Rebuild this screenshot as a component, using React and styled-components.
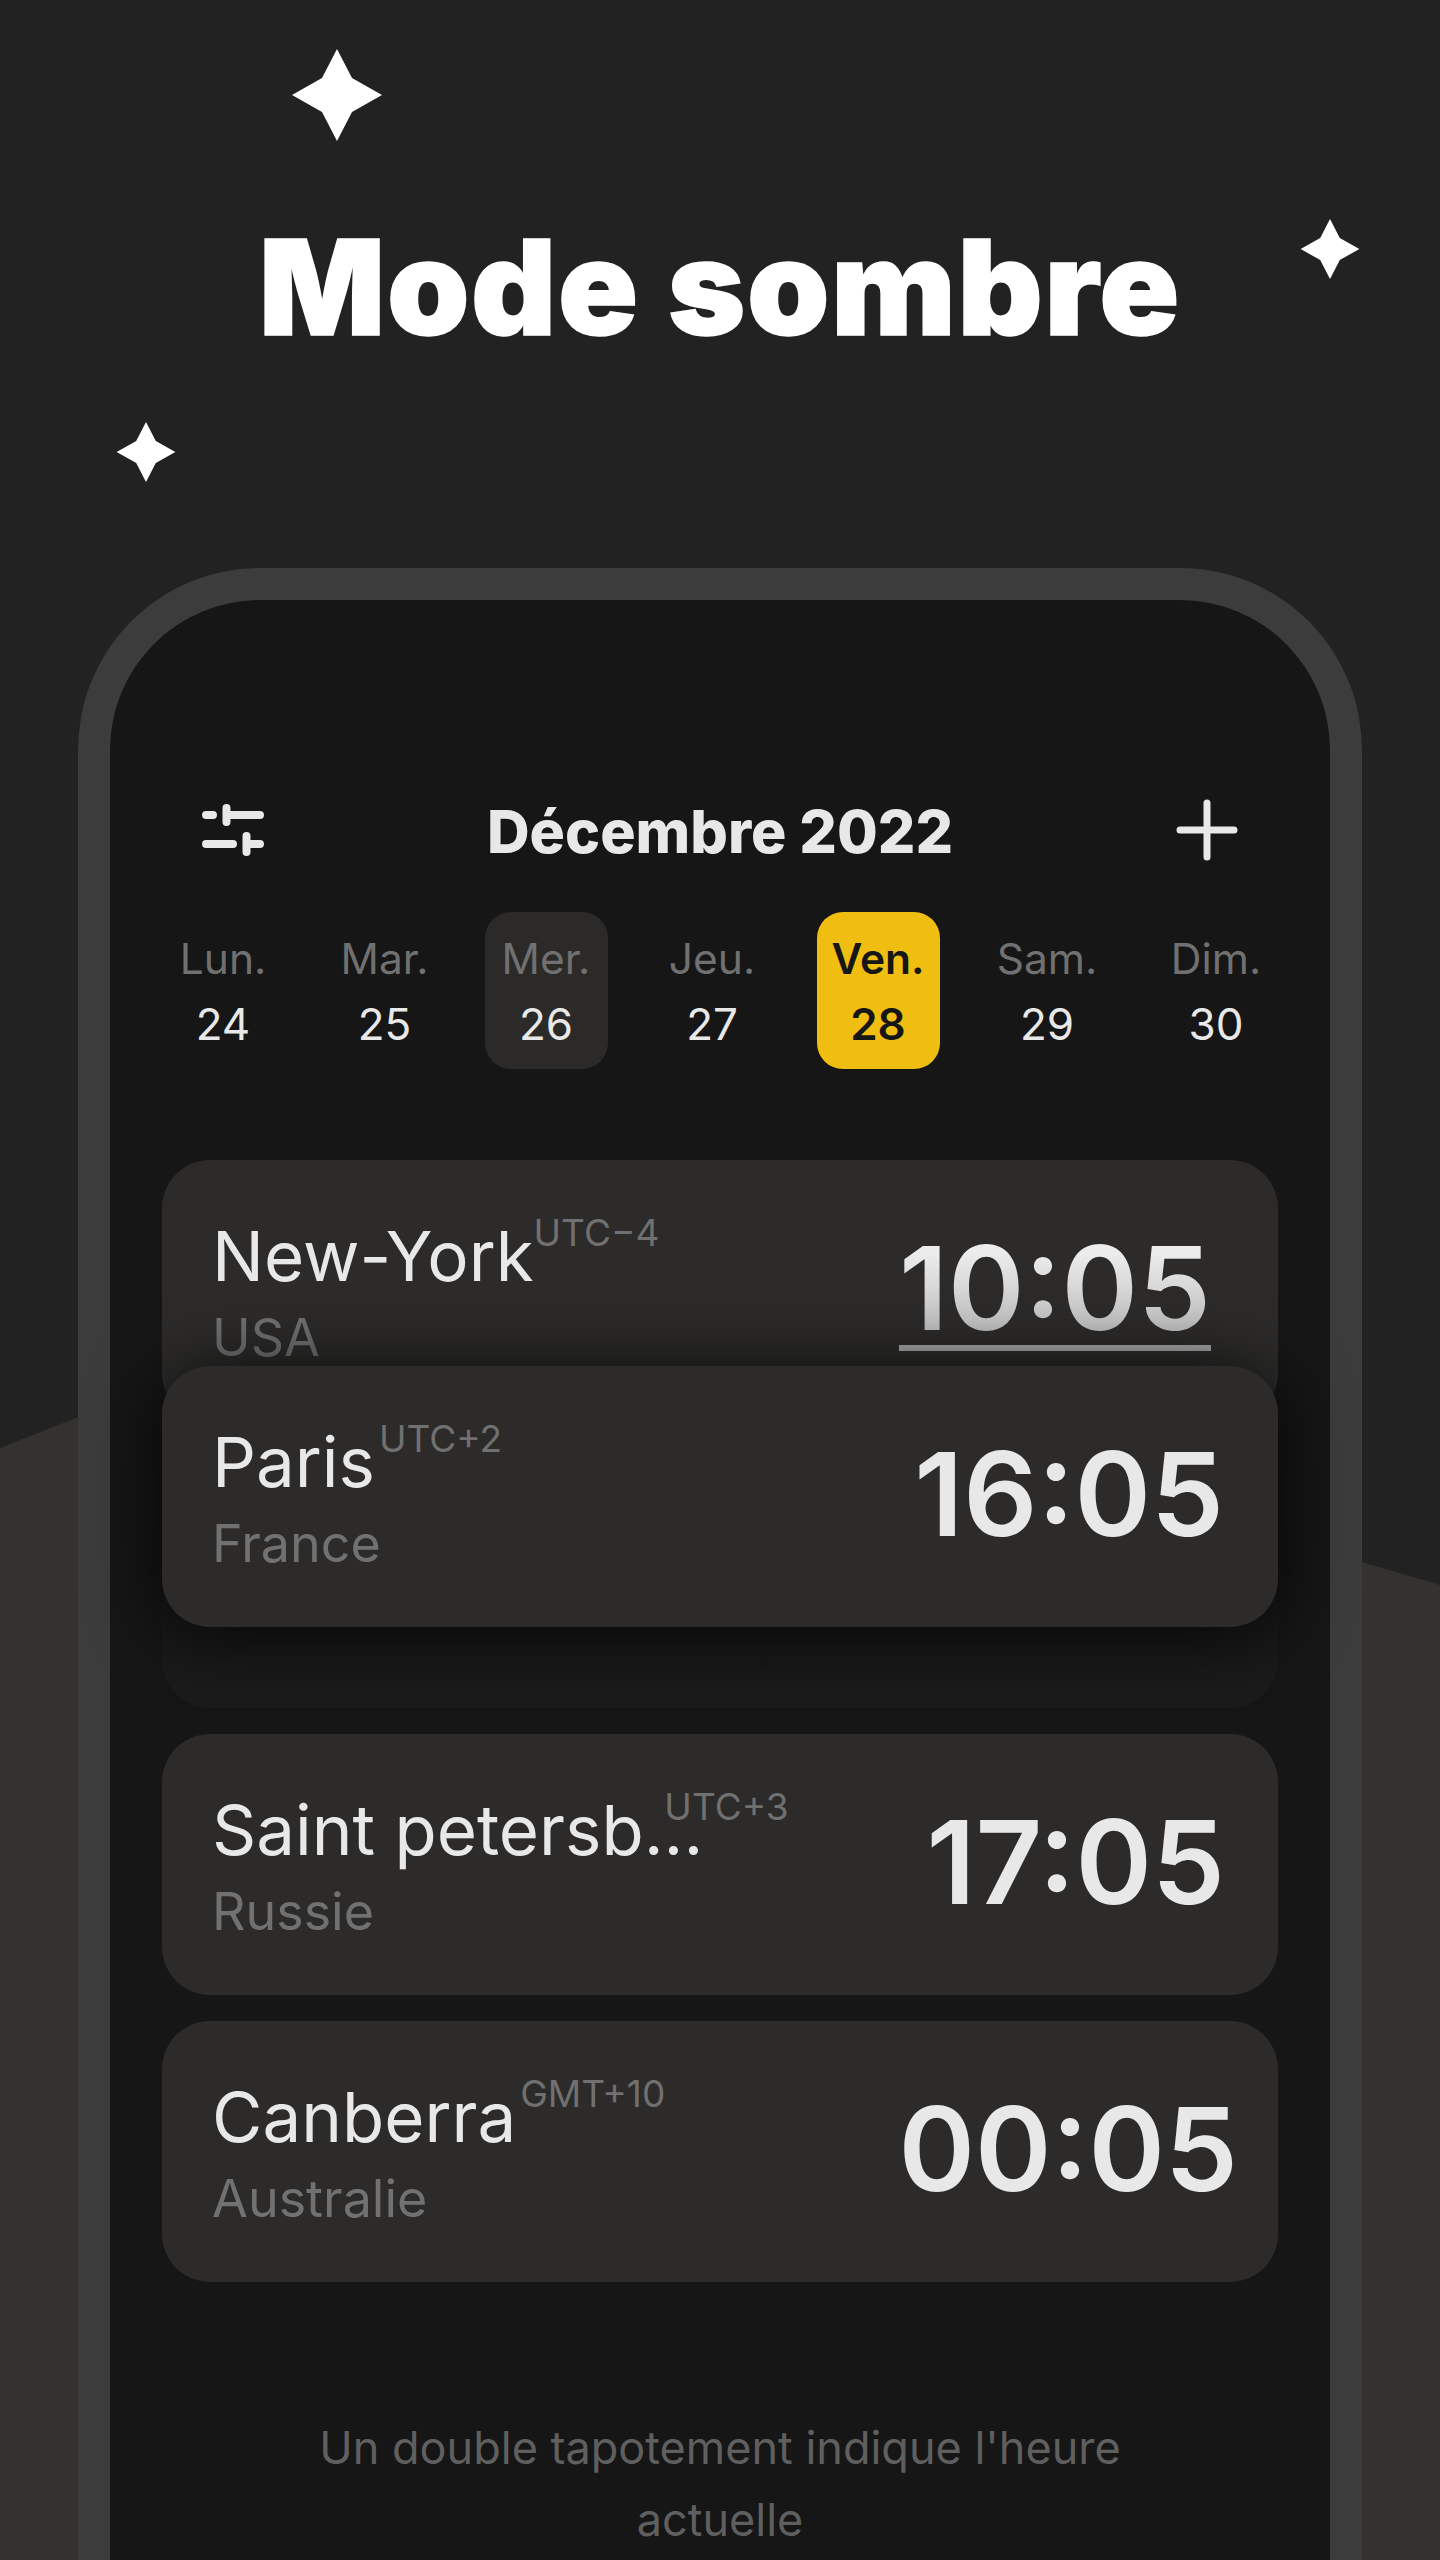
import React from 'react';
import styled, { createGlobalStyle } from 'styled-components';

const Global = createGlobalStyle`
  html, body { margin: 0; padding: 0; background: #222222; }
  body { font-family: Inter, Roboto, "Liberation Sans", sans-serif; }
`;

const Stage = styled.div`
  position: relative;
  width: 1440px;
  height: 2560px;
  overflow: hidden;
  background: #222222;
  display: flex;
  flex-direction: column;
`;

const Hill = styled.svg`
  position: absolute;
  left: 0;
  top: 0;
  width: 1440px;
  height: 2560px;
`;

const Star = styled.svg`
  position: absolute;
  left: ${p => p.$x - p.$r}px;
  top: ${p => p.$y - p.$r}px;
  width: ${p => p.$r * 2}px;
  height: ${p => p.$r * 2}px;
`;

const Title = styled.h1`
  position: relative;
  margin: 0;
  padding-top: 212px;
  height: 568px;
  box-sizing: border-box;
  text-align: center;
  color: #ffffff;
  font-weight: 900;
  font-size: 132px;
  line-height: 150px;
  letter-spacing: 1.7px;
  -webkit-text-stroke: 1.5px #ffffff;
`;

const Phone = styled.div`
  position: relative;
  flex: 1;
  margin: 0 78px;
  border: 32px solid #3c3c3c;
  border-bottom: none;
  border-radius: 182px 182px 0 0;
  background: #161616;
`;

const Header = styled.header`
  display: flex;
  align-items: center;
  justify-content: space-between;
  height: 62px;
  margin-top: 199px;
  padding: 0 92px;
`;

const Month = styled.div`
  color: #e8e8e8;
  font-weight: 800;
  font-size: 59px;
  line-height: 62px;
  padding-top: 4px;
`;

const IconSvg = styled.svg`
  display: block;
  width: 62px;
  height: ${p => p.$h}px;
  fill: none;
  stroke: #e8e8e8;
  stroke-width: ${p => p.$w}px;
  stroke-linecap: round;
`;

const Days = styled.div`
  display: grid;
  grid-template-columns: 160px 163px 160px 172px 160px 178px 160px;
  margin: 51px 0 0 33px;
`;

const Day = styled.div`
  justify-self: center;
  width: 123px;
  height: 157px;
  border-radius: 26px;
  background: ${p => (p.$state === 'today' ? '#efbe10' : p.$state === 'hover' ? '#2b2a29' : 'transparent')};
  display: flex;
  flex-direction: column;
  align-items: center;
  white-space: nowrap;
`;

const DayName = styled.span`
  margin-top: 21px;
  height: 52px;
  line-height: 52px;
  font-size: 42.5px;
  font-weight: ${p => (p.$today ? 600 : 400)};
  color: ${p => (p.$today ? '#161616' : '#707070')};
`;

const DayNum = styled.span`
  margin-top: 13px;
  height: 52px;
  line-height: 52px;
  font-size: 44px;
  font-weight: ${p => (p.$today ? 600 : 400)};
  color: ${p => (p.$today ? '#161616' : '#e8e8e8')};
`;

const List = styled.div`
  position: relative;
  display: flex;
  flex-direction: column;
  gap: 26px;
  margin: 91px 52px 0;
`;

const Card = styled.article`
  display: flex;
  justify-content: space-between;
  align-items: flex-start;
  height: 261px;
  box-sizing: border-box;
  padding: 56px 0 0 50px;
  border-radius: 48px;
  background: #2c2b2a;
`;

const Slot = styled.div`
  height: 261px;
  border-radius: 48px;
  background: linear-gradient(#131313, #1b1b1b);
`;

const Dragged = styled(Card)`
  position: absolute;
  left: 0;
  right: 0;
  top: 206px;
  box-shadow: 0 6px 70px rgba(0, 0, 0, 0.8);
`;

const Place = styled.div`
  min-width: 0;
`;

const CityLine = styled.div`
  height: 80px;
  line-height: 80px;
  font-size: 69px;
  color: #e8e8e8;
  white-space: nowrap;
`;

const Offset = styled.span`
  margin-left: ${p => p.$pull ?? 2}px;
  font-size: 37px;
  color: #707070;
  vertical-align: 35px;
  line-height: 0;
`;

const Country = styled.div`
  margin-top: 12px;
  height: 60px;
  line-height: 60px;
  font-size: 52px;
  color: #717171;
`;

const Time = styled.div`
  margin: 14px ${p => p.$inset}px 0 0;
  height: 116px;
  line-height: 116px;
  font-size: 116px;
  font-weight: 600;
  color: #e8e8e8;
  white-space: nowrap;
`;

const FadedTime = styled(Time)`
  background: linear-gradient(#ececec 20%, #bcbcbc 90%);
  -webkit-background-clip: text;
  background-clip: text;
  color: transparent;
  text-decoration: underline;
  text-decoration-color: #a6a6a6;
  text-decoration-thickness: 6px;
  text-underline-offset: 15px;
`;

const Hint = styled.p`
  margin: 130px auto 0;
  width: 860px;
  text-align: center;
  font-size: 45px;
  line-height: 72px;
  color: #5f5f5f;
`;

const StarShape = ({ x, y, r }) => (
  <Star $x={x} $y={y} $r={r} viewBox="-46 -46 92 92" fill="#ffffff">
    <path d="M0 -46 L15 -17 L45 0 L15 17 L0 46 L-15 17 L-45 0 L-15 -17 Z" />
  </Star>
);

const days = [
  ['Lun.', '24'],
  ['Mar.', '25'],
  ['Mer.', '26', 'hover'],
  ['Jeu.', '27'],
  ['Ven.', '28', 'today'],
  ['Sam.', '29'],
  ['Dim.', '30'],
];

const Details = ({ city, offset, country, pull }) => (
  <Place>
    <CityLine>
      {city}
      <Offset $pull={pull}>{offset}</Offset>
    </CityLine>
    <Country>{country}</Country>
  </Place>
);

export default function App() {
  return (
    <Stage>
      <Global />
      <Hill viewBox="0 0 1440 2560">
        <path d="M0 1448 L78 1417 C 300 1330 560 1330 720 1370 C 900 1420 1150 1505 1362 1562 L1440 1585 L1440 2560 L0 2560 Z" fill="#33322e" />
      </Hill>
      <StarShape x={337} y={95} r={46} />
      <StarShape x={1330} y={249} r={30} />
      <StarShape x={146} y={452} r={30} />
      <Title>Mode sombre</Title>
      <Phone>
        <Header>
          <IconSvg $h={52} $w={8} viewBox="0 0 62 52">
            <path d="M4 11 H11 M24.5 4 V18 M24.5 11 H58 M4 40 H31 M44.5 32 V48 M44.5 40 H58" />
          </IconSvg>
          <Month>Décembre 2022</Month>
          <IconSvg $h={62} $w={7} viewBox="0 0 62 62">
            <path d="M31 4 V58 M4 31 H58" />
          </IconSvg>
        </Header>
        <Days>
          {days.map(([name, num, state]) => (
            <Day key={num} $state={state}>
              <DayName $today={state === 'today'}>{name}</DayName>
              <DayNum $today={state === 'today'}>{num}</DayNum>
            </Day>
          ))}
        </Days>
        <List>
          <Card>
            <Details city="New-York" offset="UTC−4" country="USA" pull={0} />
            <FadedTime $inset={67}>10:05</FadedTime>
          </Card>
          <Slot />
          <Card>
            <Details city="Saint petersb..." offset="UTC+3" country="Russie" pull={-39} />
            <Time $inset={53}>17:05</Time>
          </Card>
          <Card>
            <Details city="Canberra" offset="GMT+10" country="Australie" pull={4} />
            <Time $inset={40}>00:05</Time>
          </Card>
          <Dragged>
            <Details city="Paris" offset="UTC+2" country="France" pull={4} />
            <Time $inset={54}>16:05</Time>
          </Dragged>
        </List>
        <Hint>Un double tapotement indique l'heure actuelle</Hint>
      </Phone>
    </Stage>
  );
}
